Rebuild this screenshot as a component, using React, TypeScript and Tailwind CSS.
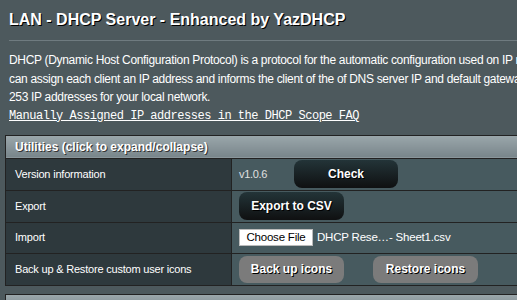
const rows = [
  { label: "Version information", kind: "version" },
  { label: "Export", kind: "export" },
  { label: "Import", kind: "import" },
  { label: "Back up & Restore custom user icons", kind: "icons" },
];

const darkBtn =
  "rounded-[8px] bg-[linear-gradient(#233438,#0f1011)] text-[12px] font-bold text-white [text-shadow:1px_1px_0_#000]";
const grayBtn =
  "rounded-[8px] bg-[#7b7b7b] text-[12px] font-bold text-white [text-shadow:1px_1px_0_#000]";

function Cell({ kind }: { kind: string }) {
  if (kind === "version") {
    return (
      <div className="flex items-center">
        <span className="w-[55px] text-[11px] tracking-[-0.3px] text-[#e0e0e0]">v1.0.6</span>
        <button className={`${darkBtn} h-[28px] w-[104px]`}>Check</button>
      </div>
    );
  }
  if (kind === "export") {
    return <button className={`${darkBtn} h-[28px] w-[105px]`}>Export to CSV</button>;
  }
  if (kind === "import") {
    return (
      <div className="flex items-center">
        <span className="flex h-[17px] w-[74px] items-center justify-center border border-[#bbb] bg-white text-[11.5px] tracking-[-0.2px] text-black">
          Choose File
        </span>
        <span className="ml-[4px] text-[11.5px] tracking-[-0.2px] text-white">DHCP Rese…- Sheet1.csv</span>
      </div>
    );
  }
  return (
    <div className="flex items-center gap-[29px]">
      <button className={`${grayBtn} h-[27px] w-[105px]`}>Back up icons</button>
      <button className={`${grayBtn} h-[27px] w-[105px]`}>Restore icons</button>
    </div>
  );
}

export default function App() {
  return (
    <div className="h-[300px] w-[517px] overflow-hidden bg-[#4d595d] font-['Liberation_Sans',Arial,sans-serif] text-white">
      <div className="w-[760px]">
        <div className="pl-[9px] pt-[10px] text-[16px] font-bold leading-[20px] [text-shadow:1px_1px_0_#000]">
          LAN - DHCP Server - Enhanced by YazDHCP
        </div>
        <div className="ml-[9px] mt-[10px] h-px bg-[#6f7b80]" />
        <div className="mt-[10px] pl-[9px] text-[12px] leading-[18.5px] tracking-[-0.32px] whitespace-nowrap">
          <div>DHCP (Dynamic Host Configuration Protocol) is a protocol for the automatic configuration used on IP networks. The DHCP server</div>
          <div>can assign each client an IP address and informs the client of the of DNS server IP and default gateway IP. The router supports up to</div>
          <div>253 IP addresses for your local network.</div>
        </div>
        <a
          href="#"
          className="mt-[1px] block pl-[9px] font-['Liberation_Mono',monospace] text-[12px] leading-[16px] tracking-[-0.47px] text-white underline"
        >
          Manually Assigned IP addresses in the DHCP Scope FAQ
        </a>
        <table className="ml-[5px] mt-[11px] w-[740px] border-collapse border border-[#222]">
          <thead>
            <tr>
              <td
                colSpan={2}
                className="h-[23px] bg-[linear-gradient(#9ba7ab,#78858a)] pl-[9px] text-[12px] font-bold [text-shadow:1px_1px_0_#333]"
              >
                Utilities (click to expand/collapse)
              </td>
            </tr>
          </thead>
          <tbody>
            {rows.map((r, i) => (
              <tr key={r.kind} className={i === 2 ? "h-[31px]" : "h-[32px]"}>
                <th className="w-[226px] border border-[#222] bg-[#2e393d] pl-[9px] text-left text-[11px] font-normal tracking-[-0.2px] text-white">
                  {r.label}
                </th>
                <td className="border border-[#222] bg-[#475a5f] pl-[7px]">
                  <Cell kind={r.kind} />
                </td>
              </tr>
            ))}
          </tbody>
        </table>
        <div className="ml-[5px] mt-[8px] h-[20px] w-[740px] border border-[#222] bg-[linear-gradient(#9ba7ab,#78858a)]" />
      </div>
    </div>
  );
}
